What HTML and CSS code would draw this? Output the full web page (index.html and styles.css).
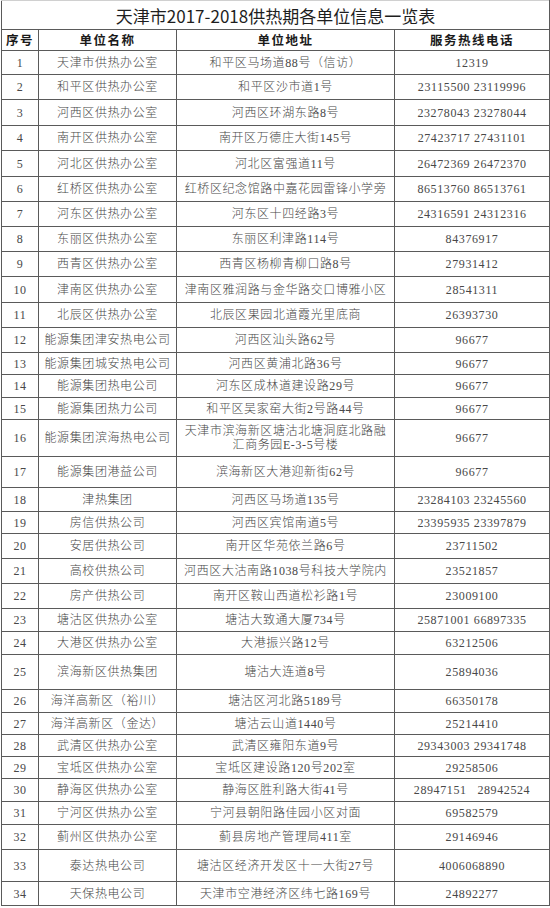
FILE: index.html
```html
<!DOCTYPE html>
<html lang="zh-CN">
<head>
<meta charset="utf-8">
<title>天津市2017-2018供热期各单位信息一览表</title>
<link rel="stylesheet" href="styles.css">
</head>
<body>
<table class="sheet">
  <colgroup>
    <col class="c-no">
    <col class="c-name">
    <col class="c-addr">
    <col class="c-tel">
  </colgroup>
  <thead>
    <tr class="title-row"><th colspan="4" class="title">天津市2017-2018供热期各单位信息一览表</th></tr>
    <tr class="head-row"><th>序号</th><th>单位名称</th><th>单位地址</th><th>服务热线电话</th></tr>
  </thead>
  <tbody>
    <tr class="h24"><td>1</td><td>天津市供热办公室</td><td>和平区马场道88号（信访）</td><td>12319</td></tr>
    <tr><td>2</td><td>和平区供热办公室</td><td>和平区沙市道1号</td><td>23115500 23119996</td></tr>
    <tr class="h26"><td>3</td><td>河西区供热办公室</td><td>河西区环湖东路8号</td><td>23278043 23278044</td></tr>
    <tr><td>4</td><td>南开区供热办公室</td><td>南开区万德庄大街145号</td><td>27423717 27431101</td></tr>
    <tr class="h26"><td>5</td><td>河北区供热办公室</td><td>河北区富强道11号</td><td>26472369 26472370</td></tr>
    <tr><td>6</td><td>红桥区供热办公室</td><td>红桥区纪念馆路中嘉花园雷锋小学旁</td><td>86513760 86513761</td></tr>
    <tr><td>7</td><td>河东区供热办公室</td><td>河东区十四经路3号</td><td>24316591 24312316</td></tr>
    <tr><td>8</td><td>东丽区供热办公室</td><td>东丽区利津路114号</td><td>84376917</td></tr>
    <tr><td>9</td><td>西青区供热办公室</td><td>西青区杨柳青柳口路8号</td><td>27931412</td></tr>
    <tr class="h26"><td>10</td><td>津南区供热办公室</td><td>津南区雅润路与金华路交口博雅小区</td><td>28541311</td></tr>
    <tr><td>11</td><td>北辰区供热办公室</td><td>北辰区果园北道霞光里底商</td><td>26393730</td></tr>
    <tr><td>12</td><td>能源集团津安热电公司</td><td>河西区汕头路62号</td><td>96677</td></tr>
    <tr class="h22"><td>13</td><td>能源集团城安热电公司</td><td>河西区黄浦北路36号</td><td>96677</td></tr>
    <tr class="h23"><td>14</td><td>能源集团热电公司</td><td>河东区成林道建设路29号</td><td>96677</td></tr>
    <tr class="h22"><td>15</td><td>能源集团热力公司</td><td>和平区吴家窑大街2号路44号</td><td>96677</td></tr>
    <tr class="h37"><td>16</td><td>能源集团滨海热电公司</td><td>天津市滨海新区塘沽北塘洞庭北路融<br>汇商务园E-3-5号楼</td><td>96677</td></tr>
    <tr class="h31"><td>17</td><td>能源集团港益公司</td><td>滨海新区大港迎新街62号</td><td>96677</td></tr>
    <tr class="h24"><td>18</td><td>津热集团</td><td>河西区马场道135号</td><td>23284103 23245560</td></tr>
    <tr class="h22"><td>19</td><td>房信供热公司</td><td>河西区宾馆南道5号</td><td>23395935 23397879</td></tr>
    <tr><td>20</td><td>安居供热公司</td><td>南开区华苑依兰路6号</td><td>23711502</td></tr>
    <tr><td>21</td><td>高校供热公司</td><td>河西区大沽南路1038号科技大学院内</td><td>23521857</td></tr>
    <tr><td>22</td><td>房产供热公司</td><td>南开区鞍山西道松衫路1号</td><td>23009100</td></tr>
    <tr class="h23"><td>23</td><td>塘沽区供热办公室</td><td>塘沽大致通大厦734号</td><td>25871001 66897335</td></tr>
    <tr class="h23"><td>24</td><td>大港区供热办公室</td><td>大港振兴路12号</td><td>63212506</td></tr>
    <tr class="h35"><td>25</td><td>滨海新区供热集团</td><td>塘沽大连道8号</td><td>25894036</td></tr>
    <tr class="h23"><td>26</td><td>海洋高新区（裕川）</td><td>塘沽区河北路5189号</td><td>66350178</td></tr>
    <tr class="h22"><td>27</td><td>海洋高新区（金达）</td><td>塘沽云山道1440号</td><td>25214410</td></tr>
    <tr class="h22"><td>28</td><td>武清区供热办公室</td><td>武清区雍阳东道9号</td><td>29343003 29341748</td></tr>
    <tr class="h22"><td>29</td><td>宝坻区供热办公室</td><td>宝坻区建设路120号202室</td><td>29258506</td></tr>
    <tr class="h23"><td>30</td><td>静海区供热办公室</td><td>静海区胜利路大街41号</td><td>28947151&nbsp;&nbsp;&nbsp;28942524</td></tr>
    <tr class="h23"><td>31</td><td>宁河区供热办公室</td><td>宁河县朝阳路佳园小区对面</td><td>69582579</td></tr>
    <tr><td>32</td><td>蓟州区供热办公室</td><td>蓟县房地产管理局411室</td><td>29146946</td></tr>
    <tr class="h32"><td>33</td><td>泰达热电公司</td><td>塘沽区经济开发区十一大街27号</td><td>4006068890</td></tr>
    <tr class="h24"><td>34</td><td>天保热电公司</td><td>天津市空港经济区纬七路169号</td><td>24892277</td></tr>
  </tbody>
</table>
</body>
</html>
```
FILE: styles.css
```css
html, body {
  margin: 0;
  padding: 0;
  background: #ffffff;
}

body {
  width: 550px;
  height: 908px;
  overflow: hidden;
  padding-left: 1px;
  box-sizing: border-box;
}

.sheet {
  width: 548px;
  table-layout: fixed;
  border-collapse: collapse;
  font-family: "Liberation Serif", "Noto Sans CJK SC", serif;
  font-size: 12px;
  line-height: 14px;
  color: #484848;
}

.c-no { width: 37px; }
.c-name { width: 138px; }
.c-addr { width: 218px; }
.c-tel { width: 155px; }

.sheet th,
.sheet td {
  border: 1px solid #5a5a5a;
  padding: 0;
  text-align: center;
  vertical-align: middle;
  white-space: nowrap;
  overflow: hidden;
}

.sheet td {
  font-weight: 300;
  letter-spacing: 0.6px;
}

.title-row { height: 29px; }

.sheet .title {
  border-top: 1px solid #d0d0d0;
  font-family: "Noto Sans CJK SC", sans-serif;
  font-size: 17px;
  font-weight: 400;
  color: #1e1e1e;
  letter-spacing: 0;
  padding-top: 1px;
}

.head-row { height: 21px; }

.head-row th {
  font-family: "Noto Sans CJK SC", sans-serif;
  font-size: 12.5px;
  font-weight: 700;
  color: #1a1a1a;
  letter-spacing: 1.5px;
}

.sheet tbody tr { height: 25px; }
.sheet tbody tr.h22 { height: 22px; }
.sheet tbody tr.h23 { height: 23px; }
.sheet tbody tr.h24 { height: 24px; }
.sheet tbody tr.h26 { height: 26px; }
.sheet tbody tr.h31 { height: 31px; }
.sheet tbody tr.h32 { height: 32px; }
.sheet tbody tr.h35 { height: 35px; }
.sheet tbody tr.h37 { height: 37px; }
```
